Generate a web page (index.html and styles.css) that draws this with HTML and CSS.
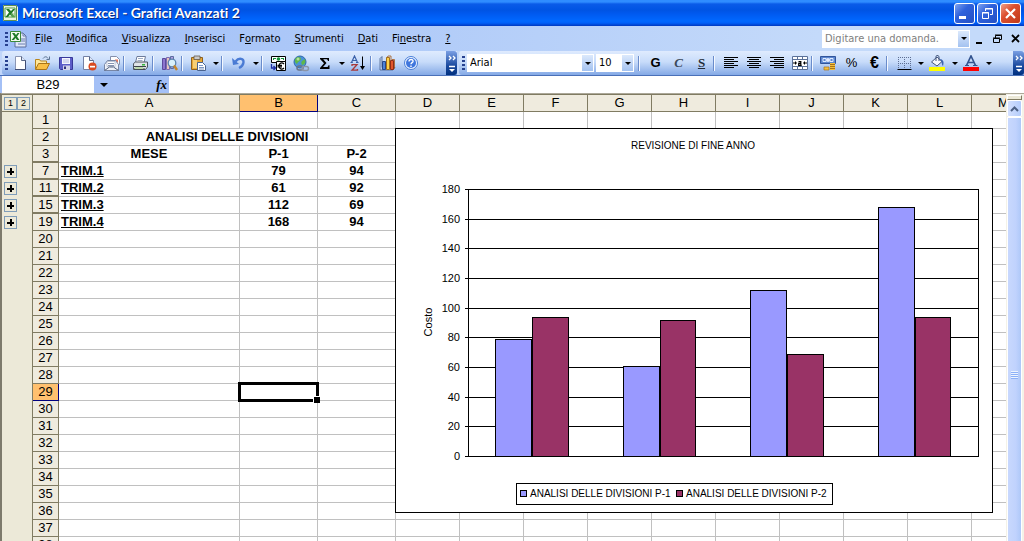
FILE: index.html
```html
<!DOCTYPE html>
<html lang="it">
<head>
<meta charset="utf-8">
<title>Microsoft Excel - Grafici Avanzati 2</title>
<link rel="stylesheet" href="styles.css">
</head>
<body>
<header class="titlebar">
  <svg class="app-icon" width="16" height="16" viewBox="0 0 16 16"><path d="M1 0h13l2 2v14H1z" fill="#e9f3e2"/><path d="M1.500.5h13v15h-13z" fill="none" stroke="#5f8f52"/><path d="M3 3h10v9H3z" fill="#fff" stroke="#4f9a44"/><path d="M4 4h3l2 2 2-2h2l-3 4 3 4h-3L8 9.500 6 12H3.500L7 7.500z" fill="#1f7a27"/><path d="M9 8h5v5H9z" fill="#8cc27c" opacity=".5"/></svg>
  <h1>Microsoft Excel - Grafici Avanzati 2</h1>
  <div class="window-buttons">
    <button class="win-btn" aria-label="Riduci a icona"><svg width="19" height="19"><path d="M4 12h7v3H4z" fill="#fff"/></svg></button>
    <button class="win-btn" aria-label="Ripristina"><svg width="19" height="19"><path d="M7.500 7V4.500h7v6H12M7 5h8" fill="none" stroke="#fff" /><path d="M4.500 8.500h6v6h-6zM4 9h7" fill="none" stroke="#fff"/></svg></button>
    <button class="win-btn win-close" aria-label="Chiudi"><svg width="19" height="19"><path d="M5 5l9 9M14 5l-9 9" stroke="#fff" stroke-width="2.200"/></svg></button>
  </div>
</header>

<nav class="menubar">
  <span class="grip"></span>
  <svg class="doc-icon" width="18" height="18" viewBox="0 0 18 18"><path d="M6 3h8l3 3v11H6z" fill="#dfe7f8" stroke="#5a6d9c"/><path d="M14 3v3h3M12 9h4M12 11h4M9 14h7" fill="none" stroke="#6b7db0"/><path d="M1.500 1.500h10v10h-10z" fill="#f4faf0" stroke="#3d8a3a"/><path d="M3 3h2.500l1.500 2 1.500-2H10.500L8 6.500 10.500 10H8L6.500 8 5 10H2.500L5.500 6.500z" fill="#1f7a27"/></svg>
  <div class="menus">
    <button><u>F</u>ile</button><button><u>M</u>odifica</button><button><u>V</u>isualizza</button><button><u>I</u>nserisci</button><button>F<u>o</u>rmato</button><button><u>S</u>trumenti</button><button><u>D</u>ati</button><button>Fi<u>n</u>estra</button><button><u>?</u></button>
  </div>
  <div class="ask">
    <input type="text" aria-label="Domanda" placeholder="Digitare una domanda.">
    <button class="drop" aria-label="Domande recenti"><i class="arrow"></i></button>
  </div>
  <div class="doc-buttons">
    <button aria-label="Riduci finestra"><svg width="12" height="12"><path d="M2 9h6v2H2z"/></svg></button>
    <button aria-label="Ripristina finestra"><svg width="12" height="12"><path d="M3.500 5V2.500h6v4H8M3 2h7M1.500 5.500h6v4h-6zM1 5h7" fill="none" stroke="#000"/></svg></button>
    <button aria-label="Chiudi finestra"><svg width="12" height="12"><path d="M2 2l7 7M9 2L2 9" stroke="#000" stroke-width="1.800"/></svg></button>
  </div>
</nav>

<div class="toolbars">
  <div class="toolbar standard">
    <span class="grip"></span>
    <button class="tool" aria-label="Nuovo"><svg width="16" height="16"><path d="M3.500 1.500h6l4 4v9h-10z" fill="#fff" stroke="#8b96b4"/><path d="M13.500 5v9.500H3" fill="none" stroke="#3f4d74"/><path d="M9.500 1.500v4h4" fill="#dce6f8" stroke="#5a6786"/></svg></button>
    <button class="tool" aria-label="Apri"><svg width="17" height="16"><path d="M1.500 14V4.500h4l1 1.500h6v3" fill="#ffe79a" stroke="#b9851c"/><path d="M1.500 14.500l3-6h11l-3 6z" fill="#f8bf45" stroke="#a8741a"/><path d="M9 3.500c2-2.500 4-2 5 0M15.500 1.500v3h-3" fill="none" stroke="#5c7391"/></svg></button>
    <button class="tool" aria-label="Salva"><svg width="16" height="16"><path d="M1.500 2.500h13v12h-12l-1-1z" fill="#5c5cc8" stroke="#38389a"/><path d="M4 3h8v6H4z" fill="#f4f4ff"/><path d="M5 5h6M5 7h6" stroke="#b5b9df"/><path d="M5 10.500h7V15H5z" fill="#d4d4ea"/><path d="M6 11.500h2V14H6z" fill="#30307c"/></svg></button>
    <button class="tool" aria-label="Autorizzazioni"><svg width="16" height="16"><path d="M2.500 1.500h6l4 4v9h-10z" fill="#fff" stroke="#7481a4"/><path d="M8.500 1.500v4h4" fill="#dce6f8" stroke="#5a6786"/><circle cx="11.500" cy="11.500" r="4" fill="#d94a22"/><path d="M9 10.800h5v1.700H9z" fill="#fff"/></svg></button>
    <button class="tool" aria-label="Posta elettronica"><svg width="18" height="17"><path d="M7.500 1.500h6l3 3v5h-9z" fill="#fff" stroke="#8590ac"/><path d="M12 4.500h3v3h-3z" fill="#e9795c"/><path d="M1.500 9.500l3-4h8l3 4v6h-14z" fill="#eef1f8" stroke="#7886a5"/><path d="M4 6.500h8v5H4z" fill="#fff" stroke="#9aa5bd" stroke-width=".6"/><path d="M5 8.500h6M5 10.500h6" stroke="#8794b2"/><path d="M1.500 15.500l5-3.500h4l5 3.500" fill="none" stroke="#53627f"/></svg></button>
    <span class="sep"></span>
    <button class="tool" aria-label="Stampa"><svg width="17" height="17"><path d="M5 1.500h8.500L12 7.500H3.500z" fill="#fff" stroke="#6d7b9b"/><path d="M6 3.500h5M5.500 5.500h5" stroke="#9eabc4"/><path d="M1.500 8.500l2-1.500h12v5l-2 2.500h-12z" fill="#dfe3e8" stroke="#4c5560"/><path d="M2 11.500h12M2 14h11" stroke="#3b4349"/><path d="M3 12h8v2H3z" fill="#bcd8ab"/><path d="M10 9h3v1.500h-3z" fill="#35b53b"/></svg></button>
    <span class="sep"></span>
    <button class="tool" aria-label="Ricerche"><svg width="17" height="17"><path d="M1.500 3.500h3v11h-3z" fill="#8c75cf" stroke="#5c4a9c"/><path d="M5.500 2.500h3v12h-3z" fill="#e6c4bd" stroke="#7d6bb0"/><path d="M9.500 1.500h3v12h-3z" fill="#b3a0e2" stroke="#5c6da0"/><circle cx="11" cy="8" r="3.800" fill="#d8f0fb" stroke="#5a83ad" stroke-width="1.300"/><path d="M13 10.500l3 4.500" stroke="#c4862c" stroke-width="2.400"/></svg></button>
    <span class="sep"></span>
    <button class="tool" aria-label="Incolla"><svg width="17" height="17"><path d="M1.500 2.500h11v12h-11z" fill="#e8a936" stroke="#8e6220"/><path d="M4 1h6v3.500H4z" fill="#c9c9c9" stroke="#64584a" stroke-width=".8"/><path d="M3 5h4v8H3z" fill="#f7cf75"/><path d="M7.500 7.500h5l3 3v5h-8z" fill="#fff" stroke="#49638f"/><path d="M9 10.500h4M9 12.500h5M9 14h5" stroke="#7e98c4"/></svg></button>
    <button class="tool-drop" aria-label="Opzioni Incolla"><i class="arrow"></i></button>
    <span class="sep"></span>
    <button class="tool" aria-label="Annulla"><svg width="16" height="16"><path d="M4.500 6.500C8 2 13 3.500 12.500 7.500 12 11 10 12 8 13" fill="none" stroke="#4a7bd4" stroke-width="2.300"/><path d="M1 3l1 7 6-1z" fill="#4a7bd4"/></svg></button>
    <button class="tool-drop" aria-label="Cronologia Annulla"><i class="arrow"></i></button>
    <span class="sep"></span>
    <button class="tool" aria-label="Conversione in euro"><svg width="17" height="17"><path d="M1.500 1.500h14v6h-14z" fill="#fff" stroke="#000"/><path d="M3 3h3v1H4v1H3zM14 3h-3v1h2v1h1z" fill="#18903a"/><circle cx="8.500" cy="4" r="1.800" fill="#18903a"/><path d="M6.500 6.500h9v9h-9z" fill="#fff" stroke="#000"/><path d="M14 9c-2-2-5-1-5 2s3 4 5 2M7.500 10.400h4.500M7.500 11.900h4.500" fill="none" stroke="#000" stroke-width="1.200"/><path d="M1.500 9v4H5M3.500 11l2 2-2 2" fill="none" stroke="#1c2ea4" stroke-width="1.300"/></svg></button>
    <button class="tool" aria-label="Collegamento ipertestuale"><svg width="17" height="17"><circle cx="7" cy="7" r="6" fill="#4a92d8" stroke="#2f68a8"/><path d="M3 3c2-2 5-1 5 1S5 6 4 9C2 8 1 5 3 3zM9 6l3-2c1 3 0 5-2 6-2 0-2-3-1-4z" fill="#5fb84a"/><circle cx="5" cy="4" r="1.500" fill="#d3f0c0" opacity=".7"/><rect x="4" y="11" width="6" height="4" rx="2" fill="none" stroke="#6a7487" stroke-width="1.500"/><rect x="9" y="11.500" width="6.500" height="4" rx="2" fill="none" stroke="#8b95a8" stroke-width="1.500"/></svg></button>
    <button class="tool" aria-label="Somma automatica"><svg width="16" height="16"><path d="M3 3h9v3h-1C10.500 4.500 10 4.300 9 4.300H6.200L9.500 8 6 12h3.500c1.200 0 1.700-.5 2-1.800h1V14H3v-1l4-4.800L3 4z"/></svg></button>
    <button class="tool-drop" aria-label="Altre funzioni"><i class="arrow"></i></button>
    <button class="tool" aria-label="Ordinamento crescente"><svg width="17" height="17"><path d="M1.500 7.500L4.500 1l3 6.500M2.500 5.500h4M.5 7.500h2.300M6 7.500h2.500" fill="none" stroke="#3a60a8" stroke-width="1.200"/><path d="M2 11V9.700h5L2 15.200h5.500V14" fill="none" stroke="#a83a3a" stroke-width="1.300"/><path d="M12.500 1.500v11" stroke="#000"/><path d="M10 11h5l-2.500 4z"/></svg></button>
    <span class="sep"></span>
    <button class="tool" aria-label="Creazione guidata Grafico"><svg width="17" height="17"><path d="M1 3.500l2-2v11h13l-2 2.500H1z" fill="#b9cdee" stroke="#46618e" stroke-width=".8"/><path d="M3.500 6.500h3v8h-3z" fill="#4d82d8" stroke="#27498c"/><path d="M7.500 2.500h3v12h-3z" fill="#ffd24a" stroke="#a5701a"/><path d="M11.500 5.500h3v9h-3z" fill="#e2562c" stroke="#8f2c17"/><path d="M8 2.500l1-1.500h3v4M12 5.500l1-1h2.500v9" fill="none" stroke="#a5581a" stroke-width=".8"/></svg></button>
    <button class="tool" aria-label="Guida"><svg width="16" height="16"><circle cx="8" cy="8" r="6.500" fill="#eef5ff" stroke="#4a7fd8"/><circle cx="8" cy="8" r="5" fill="#3f76dd"/><path d="M6 6.500c0-3 4.500-2.500 4 0-.3 1.200-2 1.200-2 2.800M8 10.500v1.500" fill="none" stroke="#fff" stroke-width="1.400"/></svg></button>
    <button class="cap" aria-label="Opzioni barra Standard"><svg width="10" height="20"><path d="M2 3l2 2-2 2M6 3l2 2-2 2M2 13.500h6" fill="none" stroke="#fff" stroke-width="1.300"/><path d="M2 16h6l-3 3z" fill="#fff"/></svg></button>
  </div>
  <div class="toolbar formatting">
    <span class="grip"></span>
    <div class="combo font"><select aria-label="Tipo di carattere"><option>Arial</option></select><span class="drop"><i class="arrow"></i></span></div>
    <div class="combo size"><select aria-label="Dimensione carattere"><option>10</option></select><span class="drop"><i class="arrow"></i></span></div>
    <span class="sep"></span>
    <button class="tool letter bold" aria-label="Grassetto">G</button>
    <button class="tool letter italic" aria-label="Corsivo">C</button>
    <button class="tool letter under" aria-label="Sottolineato">S</button>
    <span class="sep"></span>
    <button class="tool" aria-label="Allinea a sinistra"><svg width="16" height="16"><path d="M1 2.500h14M1 4.500h10M1 6.500h14M1 8.500h10M1 10.500h14M1 12.500h10" stroke="#000"/></svg></button>
    <button class="tool" aria-label="Allinea al centro"><svg width="16" height="16"><path d="M1 2.500h14M3 4.500h10M1 6.500h14M3 8.500h10M1 10.500h14M3 12.500h10" stroke="#000"/></svg></button>
    <button class="tool" aria-label="Allinea a destra"><svg width="16" height="16"><path d="M1 2.500h14M5 4.500h10M1 6.500h14M5 8.500h10M1 10.500h14M5 12.500h10" stroke="#000"/></svg></button>
    <button class="tool" aria-label="Unisci e centra"><svg width="16" height="16"><path d="M.5 1.500h15v13H.5zM.5 4.500h15M.5 11.500h15M5.500 1.500v3M10.500 1.500v3M5.500 11.500v3M10.500 11.500v3" fill="#fff" stroke="#5b7199"/><path d="M1 8h3M15 8h-3" stroke="#000"/><path d="M3 6l2 2-2 2zM13 6l-2 2 2 2z"/><path d="M6.500 6.700h2.300v3.600M8.800 8.300H6.700v2h3" fill="none" stroke="#000" stroke-width="1.200"/></svg></button>
    <span class="sep"></span>
    <button class="tool" aria-label="Valuta"><svg width="17" height="17"><path d="M.5 1.500h15v7H.5z" fill="#5b86cf" stroke="#31549b"/><path d="M3 3.500h3v3H3zM10 3.500h3v3h-3z" fill="none" stroke="#dfeaff"/><circle cx="8" cy="5" r="2" fill="#dfeaff"/><path d="M10 8h5v7h-5z" fill="#f3bf3c"/><path d="M10 9.500h5M10 11.500h5M10 13.500h5" stroke="#a9741a"/><path d="M4 12h5v3H4z" fill="#f3bf3c" stroke="#a9741a" stroke-width=".7"/></svg></button>
    <button class="tool letter percent" aria-label="Percentuale">%</button>
    <button class="tool letter euro" aria-label="Euro">€</button>
    <span class="sep"></span>
    <button class="tool" aria-label="Bordi"><svg width="16" height="16"><path d="M2 2.500h13M2 8.500h13M2.500 2v12M8.500 2v12M14.500 2v12" stroke="#5e6f93" stroke-dasharray="1 1"/><path d="M1.500 14.500h14" stroke="#000"/></svg></button>
    <button class="tool-drop" aria-label="Opzioni bordi"><i class="arrow"></i></button>
    <button class="tool" aria-label="Colore riempimento"><svg width="17" height="17"><path d="M2.500 7L8 2l5 4.500-5 4.500z" fill="#f4f7fd" stroke="#42557c"/><path d="M7 6V1.500c0-1.500 3-1.500 3 .5v4" fill="none" stroke="#42557c"/><path d="M11 4c4 .5 4 4 3 7-1.500-1-1-4-2-5z" fill="#3d66b2"/><path d="M0 12h16v4H0z" fill="#ffff00"/></svg></button>
    <button class="tool-drop" aria-label="Colori riempimento"><i class="arrow"></i></button>
    <button class="tool" aria-label="Colore carattere"><svg width="17" height="17"><path d="M3.500 10.500L8 1l4.500 9.500M5 7.500h6" fill="none" stroke="#34548f" stroke-width="1.700"/><path d="M2 10.500h4M10 10.500h4.500" stroke="#34548f"/><path d="M0 12h16v4H0z" fill="#f00"/></svg></button>
    <button class="tool-drop" aria-label="Colori carattere"><i class="arrow"></i></button>
    <button class="cap" aria-label="Opzioni barra Formattazione"><svg width="10" height="20"><path d="M2 3l2 2-2 2M6 3l2 2-2 2M2 13.500h6" fill="none" stroke="#fff" stroke-width="1.300"/><path d="M2 16h6l-3 3z" fill="#fff"/></svg></button>
  </div>
</div>

<div class="formulabar">
  <input class="namebox" type="text" aria-label="Casella Nome" value="B29">
  <button class="name-drop" aria-label="Elenco nomi"><i class="arrow wide"></i></button>
  <button class="fx" aria-label="Inserisci funzione">fx</button>
  <input class="formula" type="text" aria-label="Barra della formula">
</div>

<main class="workbook">
  <div class="grid-area" id="grid">
    <table class="sheet">
      <colgroup><col class="c-outline"><col class="c-row"><col class="c-a"><col class="c-b"><col class="c-b"></colgroup>
      <thead>
        <tr><th class="outline"><span class="levels"><button>1</button><button>2</button></span></th><th></th><th>A</th><th class="current">B</th><th>C</th><th>D</th><th>E</th><th>F</th><th>G</th><th>H</th><th>I</th><th>J</th><th>K</th><th>L</th><th>M</th></tr>
      </thead>
      <tbody id="rows">
        <tr><td class="outline"></td><th>1</th><td></td><td></td><td></td></tr>
        <tr><td class="outline"></td><th>2</th><td colspan="3">ANALISI DELLE DIVISIONI</td></tr>
        <tr class="hidden-after"><td class="outline"></td><th>3</th><td>MESE</td><td>P-1</td><td>P-2</td></tr>
        <tr class="hidden-after"><td class="outline"><button aria-label="Espandi 7"></button></td><th>7</th><td class="label">TRIM.1</td><td>79</td><td>94</td></tr>
        <tr class="hidden-after"><td class="outline"><button aria-label="Espandi 11"></button></td><th>11</th><td class="label">TRIM.2</td><td>61</td><td>92</td></tr>
        <tr class="hidden-after"><td class="outline"><button aria-label="Espandi 15"></button></td><th>15</th><td class="label">TRIM.3</td><td>112</td><td>69</td></tr>
        <tr><td class="outline"><button aria-label="Espandi 19"></button></td><th>19</th><td class="label">TRIM.4</td><td>168</td><td>94</td></tr>
      </tbody>
    </table>
    <svg class="chart" width="598" height="385" viewBox="395 128 598 385" role="img" aria-label="Revisione di fine anno">
      <rect class="frame" x="395.500" y="128.500" width="597" height="384"/>
      <text class="small" x="693" y="149" text-anchor="middle">REVISIONE DI FINE ANNO</text>
      <text transform="translate(432 322) rotate(-90)" text-anchor="middle">Costo</text>
      <path class="lines" d="M465 189.500H979M465 219.500H979M465 248.500H979M465 278.500H979M465 308.500H979M465 337.500H979M465 367.500H979M465 397.500H979M465 426.500H979M465 456.500H979M468.500 189V457M978.500 189V457"/>
      <g text-anchor="end">
        <text x="460" y="193">180</text><text x="460" y="223">160</text><text x="460" y="252">140</text><text x="460" y="282">120</text><text x="460" y="312">100</text><text x="460" y="341">80</text><text x="460" y="371">60</text><text x="460" y="401">40</text><text x="460" y="430">20</text><text x="460" y="460">0</text>
      </g>
      <g class="p1"><path d="M495.500 456.500v-117h36v117zM623.500 456.500v-90h36v90zM750.500 456.500v-166h36v166zM878.500 456.500v-249h36v249z"/></g>
      <g class="p2"><path d="M532.500 456.500v-139h36v139zM660.500 456.500v-136h35v136zM787.500 456.500v-102h36v102zM915.500 456.500v-139h35v139z"/></g>
      <rect class="frame" x="516.500" y="483.500" width="316" height="21"/>
      <rect class="p1" x="520.500" y="490.500" width="6" height="6"/><text class="small" x="530" y="497">ANALISI DELLE DIVISIONI P-1</text>
      <rect class="p2" x="676.500" y="490.500" width="6" height="6"/><text class="small" x="686" y="497">ANALISI DELLE DIVISIONI P-2</text>
    </svg>
  </div>
  <div class="scrollbar">
    <span class="split"></span>
    <button class="scroll-up" aria-label="Scorri su"><svg width="9" height="6"><path d="M1 5l3.500-3.500L8 5" fill="none" stroke="#4d6185" stroke-width="2"/></svg></button>
    <div class="track"><div class="thumb"><span></span></div></div>
  </div>
</main>
<script src="sheet.js"></script>
</body>
</html>
```
FILE: styles.css
```css
* { box-sizing: border-box; }
html, body { height: 100%; }
body {
  margin: 0;
  display: flex;
  flex-direction: column;
  overflow: hidden;
  background: #a4c0f6;
  color: #000;
  font: 11px/16px "DejaVu Sans Condensed", "Noto Sans", sans-serif;
}
button, input, select { font: inherit; color: inherit; margin: 0; padding: 0; border: 0; border-radius: 0; background: none; }
button { display: flex; align-items: center; justify-content: center; flex: none; }
svg { display: block; flex: none; }

.titlebar {
  display: flex;
  align-items: center;
  flex: none;
  height: 26px;
  padding: 0 3px 0 2px;
  gap: 4px;
  background: linear-gradient(#2f8cff 0, #2f8cff 2px, #0a5be8 4px, #0054e3 10px, #005af0 14px, #0068ff 21px, #0060f8 23px, #0038c0 26px);
}
.titlebar h1 {
  flex: 1;
  margin: 0;
  color: #fff;
  font: bold 14px/20px Lato, "Open Sans", sans-serif;
  font-variant-ligatures: none;
  text-shadow: 1px 1px 0 #0a2a80;
  white-space: nowrap;
}
.window-buttons { display: flex; gap: 2px; }
.win-btn {
  width: 21px;
  height: 21px;
  border: 1px solid #fff;
  border-radius: 3px;
  background: linear-gradient(135deg, #7da2f0, #2f62dc 40%, #2450c4);
}
.win-close { background: linear-gradient(135deg, #f0a088, #dc5030 40%, #c03818); }

.menubar {
  display: flex;
  align-items: center;
  flex: none;
  height: 25px;
  padding-left: 5px;
  background: linear-gradient(90deg, #9ebdf7, #c4dafa 80%);
}
.grip {
  flex: none;
  width: 3px;
  height: 14px;
  background: repeating-linear-gradient(#27418f 0, #27418f 2px, transparent 2px, transparent 4px);
}
.doc-icon { margin-left: 1px; }
.menus { display: flex; flex: 1; gap: 14px; padding-left: 8px; }
.ask { display: flex; width: 148px; height: 18px; border: 1px solid #fff; background: #fff; }
.ask input { flex: 1; min-width: 0; padding-left: 2px; }
.ask input::placeholder { color: #808080; opacity: 1; }
.drop {
  display: flex;
  align-items: center;
  justify-content: center;
  flex: none;
  width: 11px;
  background: linear-gradient(#dce9fc, #a4c2f0);
}
.arrow { flex: none; border: 3px solid transparent; border-top-color: #000; border-bottom: 0; }
.arrow.wide { border-width: 4px 4px 0; }
.doc-buttons { display: flex; gap: 6px; padding: 0 2px 0 4px; }

.toolbars { display: flex; flex: none; height: 25px; background: #c0d6fa; border-bottom: 1px solid #4a70b8; }
.toolbar {
  display: flex;
  align-items: center;
  height: 24px;
  border-radius: 3px 0 0 3px;
  background: linear-gradient(#dfebfe, #c8dcfa 45%, #84a9e6);
}
.standard { margin-left: 2px; padding-left: 3px; width: 455px; }
.formatting { flex: 1; margin-left: 2px; padding-left: 3px; }
.tool { width: 23px; height: 22px; }
.tool-drop { width: 11px; height: 22px; }
.sep { flex: none; width: 6px; height: 15px; border-left: 1px solid #6a8ccb; border-right: 4px solid transparent; background: #f4f8ff; background-clip: padding-box; }
.cap {
  width: 11px;
  height: 24px;
  margin-left: auto;
  border-radius: 0 3px 3px 0;
  background: linear-gradient(#7a9fe4, #1c4ba0 60%, #00307f);
}
.combo { display: flex; flex: none; height: 18px; border: 1px solid #fff; background: #fff; }
.combo select { flex: 1; min-width: 0; padding-left: 2px; appearance: none; }
.font { width: 127px; margin-left: 2px; }
.size { width: 38px; margin: 0 4px 0 2px; }
.letter { font: bold 13px/16px "Liberation Sans", Arial, sans-serif; }
.italic { font: italic bold 13px/16px "Liberation Serif", serif; color: #3c4a5c; }
.under { font: bold 13px/16px "Liberation Serif", serif; text-decoration: underline; color: #222c38; }
.percent { font-weight: normal; }
.euro { font-size: 16px; }

.formulabar { display: flex; flex: none; height: 17px; padding-left: 2px; }
.formulabar input { background: #fff; font: 13px/16px "Liberation Sans", Arial, sans-serif; }
.formulabar .namebox { width: 92px; text-align: center; }
.name-drop { width: 19px; }
.fx { width: 56px; padding-right: 2px; justify-content: flex-end; font: italic bold 13px/16px "Liberation Serif", serif; }
.formula { flex: 1; min-width: 0; }

.workbook {
  display: flex;
  flex: 1;
  min-height: 0;
  border-top: 1px solid #aca899;
  border-left: 2px solid #7d7a6c;
  background: #ece9d8;
}
.grid-area { position: relative; flex: 1; min-width: 0; overflow: hidden; border-top: 1px solid #807b62; background: #fff; }
.sheet {
  table-layout: fixed;
  width: 1034px;
  border-collapse: separate;
  border-spacing: 0;
  font: 13px/16px "Liberation Sans", Arial, sans-serif;
}
.c-outline { width: 31px; }
.c-row { width: 26px; }
.c-a { width: 181px; }
.c-b { width: 78px; }
.sheet td, .sheet th {
  height: 17px;
  padding: 0;
  overflow: hidden;
  border: solid #c0c0c0;
  border-width: 0 1px 1px 0;
  text-align: center;
  font-weight: bold;
}
.sheet th { border-color: #807b62; background: #efebde; font-weight: normal; }
.sheet .outline { border-width: 0 1px 0 0; border-color: #807b62; background: #ece9d8; }
.sheet thead .outline { border-bottom-width: 1px; }
.sheet .hidden-after th { border-bottom-width: 2px; line-height: 15px; }
.sheet th.current { border-color: #000080; background: #ffc06f; }
.sheet .label { padding-left: 2px; text-align: left; text-decoration: underline; }
.sheet .selected { position: relative; overflow: visible; }
.selection { position: absolute; inset: -2px; border: 3px solid #000; }
.selection::after {
  content: "";
  position: absolute;
  right: -4px;
  bottom: -4px;
  width: 6px;
  height: 6px;
  border: solid #fff;
  border-width: 1px 0 0 1px;
  background: #000;
}
.levels { display: flex; padding-left: 2px; }
.levels button, .outline > button {
  width: 13px;
  height: 13px;
  border: 1px solid #7f9db9;
  font-size: 9px;
  line-height: 11px;
}
.outline > button {
  margin-left: 2px;
  background:
    linear-gradient(#000, #000) center / 7px 2px no-repeat,
    linear-gradient(#000, #000) center / 2px 7px no-repeat;
}

.chart { position: absolute; left: 393px; top: 33px; font: 11px "Liberation Sans", Arial, sans-serif; shape-rendering: crispEdges; }
.small { font-size: 10px; }
.frame { fill: #fff; stroke: #000; }
.lines { fill: none; stroke: #000; }
.p1 { fill: #9999ff; stroke: #000; }
.p2 { fill: #993366; stroke: #000; }

.scrollbar { display: flex; flex-direction: column; flex: none; width: 18px; padding: 1px 2px 0 1px; background: #f4f2e8; overflow: hidden; }
.split { flex: none; height: 5px; border: 1px solid #807b62; border-top-color: #fff; border-left-color: #fff; background: #ece9d8; }
.scroll-up {
  width: 15px;
  height: 17px;
  border: 1px solid #fff;
  border-radius: 2px;
  background: linear-gradient(90deg, #d4e0fe, #b4ccfb);
}
.track { flex: 1; min-height: 0; overflow: hidden; }
.thumb {
  display: flex;
  align-items: center;
  justify-content: center;
  height: 516px;
  border: 1px solid #fff;
  background: linear-gradient(90deg, #c8d8fd, #c0d2fd 60%, #aec8f8);
}
.thumb span { width: 7px; height: 8px; background: repeating-linear-gradient(#eef4fe 0, #eef4fe 1px, #8cb0f8 1px, #8cb0f8 2px); }
```
FILE: sheet.js
```js
const grid = document.getElementById("grid");
const body = document.getElementById("rows");
const COLUMNS = 13;
let next = 20;

for (const row of body.rows) {
  for (let i = 0; i < COLUMNS - 3; i++) row.append(document.createElement("td"));
}

function addRow(n) {
  const row = body.insertRow();
  row.insertCell().className = "outline";
  const head = document.createElement("th");
  head.textContent = n;
  row.append(head);
  for (let i = 0; i < COLUMNS; i++) row.insertCell();
  if (n === 29) {
    head.className = "current";
    const cell = row.cells[3];
    cell.className = "selected";
    const box = document.createElement("div");
    box.className = "selection";
    cell.append(box);
  }
}

// Adds blank rows until the visible part of the sheet is full.
function fill() {
  while (body.parentElement.offsetHeight < grid.clientHeight) addRow(next++);
}

fill();
addEventListener("resize", fill);
```
